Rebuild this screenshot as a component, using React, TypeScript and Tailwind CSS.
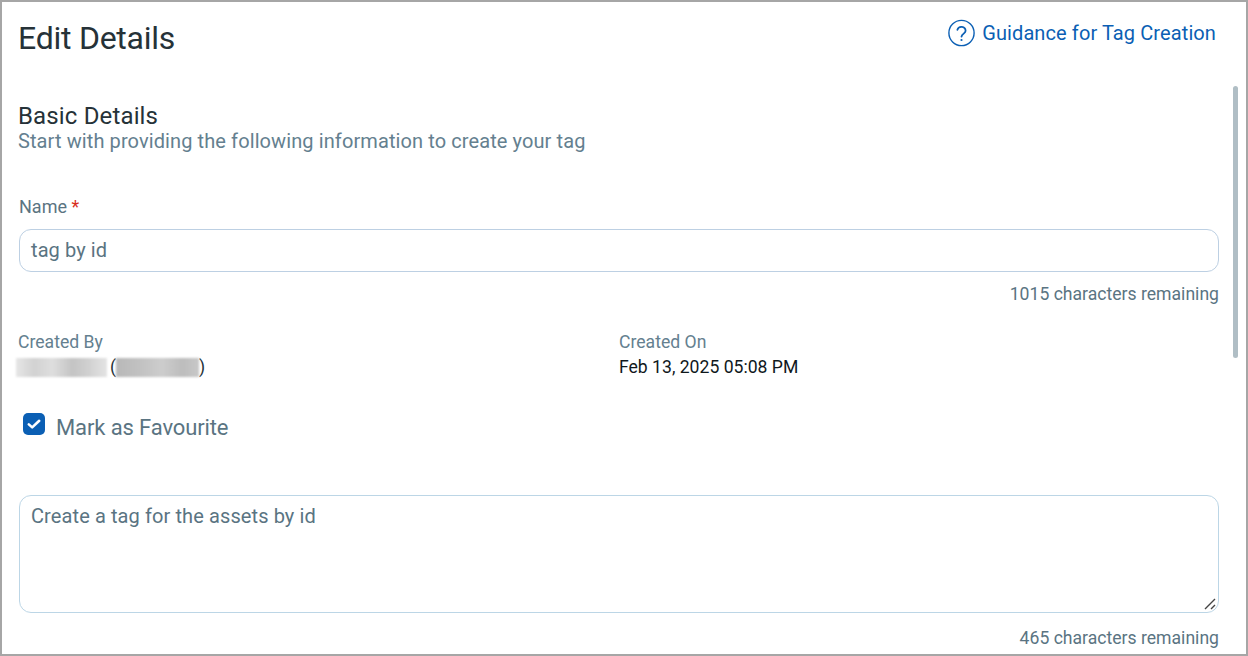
export default function App() {
  return (
    <div className="relative h-[656px] w-[1248px] overflow-hidden border-2 border-[#a6a6a6] bg-white font-['Roboto',sans-serif] text-[#5a7482]">
      <div className="flex items-start justify-between pl-[16px] pr-[30px]">
        <h1 className="mt-[16px] text-[32px] leading-[40px] tracking-[-0.25px] text-[#263238]">Edit Details</h1>
        <a className="mt-[17px] flex items-center gap-[7px] text-[20px] leading-[28px] tracking-[0.1px] text-[#0b5fb4]">
          <svg width="27" height="28" viewBox="0 0 27 28" fill="none" stroke="#0b5fb4" strokeWidth="1.4">
            <circle cx="13.5" cy="14" r="12.6" />
            <path d="M9.4 10.8a4.2 4.2 0 0 1 8.2 1c0 2.6-3.8 3-4.1 5.9" strokeWidth="1.8" strokeLinecap="round" />
            <circle cx="13.5" cy="21" r="1.1" fill="#0b5fb4" stroke="none" />
          </svg>
          Guidance for Tag Creation
        </a>
      </div>
      <div className="pl-[16px] pr-[27px] pt-[44px]">
        <h2 className="text-[24px] leading-[28px] tracking-[0.15px] text-[#263238]">Basic Details</h2>
        <p className="-mt-px text-[20px] leading-[24px] tracking-[0.1px] text-[#64808f]">Start with providing the following information to create your tag</p>

        <label className="mt-[42px] block pl-px text-[18px] leading-[24px]">
          Name <span className="text-[#d9301f]">*</span>
        </label>
        <div className="mt-[10px] ml-px flex h-[43px] items-center rounded-[12px] border border-[#bdd0e3] px-[11px] pb-[2px] text-[20px] tracking-[0.1px]">tag by id</div>
        <p className="mt-[10px] text-right text-[17.6px] leading-[24px]">1015 characters remaining</p>

        <div className="mt-[24px] flex text-[17.6px] leading-[24px]">
          <div className="w-[601px]">
            <p className="text-[#64808f]">Created By</p>
            <div className="mt-px flex items-center text-[#263238]">
              <span className="-ml-[2px] h-[19px] w-[91px] bg-[linear-gradient(90deg,#e6e6e6,#d2d2d2_20%,#dedede_40%,#c4c4c4_62%,#cfcfcf_78%,#e4e4e4)] blur-[1px]" />
              <span className="ml-[3px]">(</span>
              <span className="h-[19px] w-[83px] bg-[linear-gradient(90deg,#b8b8b8,#c2c2c2_30%,#cdcdcd_55%,#bdbdbd_80%,#c8c8c8)] blur-[1px]" />
              <span>)</span>
            </div>
          </div>
          <div>
            <p className="text-[#64808f]">Created On</p>
            <p className="mt-px text-[#10181c]">Feb 13, 2025 05:08 PM</p>
          </div>
        </div>

        <div className="mt-[32px] ml-[5px] flex h-[32px] items-center gap-[11px] text-[22px] tracking-[-0.12px]">
          <span className="-mt-[6px] flex h-[22px] w-[22px] items-center justify-center rounded-[5px] bg-[#0b5fb4]">
            <svg width="16" height="16" viewBox="0 0 16 16" fill="none" stroke="white" strokeWidth="2.6" strokeLinecap="round" strokeLinejoin="round">
              <path d="M2.8 8.4l3.4 3 7-6.6" />
            </svg>
          </span>
          Mark as Favourite
        </div>

        <div className="relative mt-[52px] ml-px h-[118px] rounded-[12px] border border-[#bcd6e6] px-[11px] pt-[6px] text-[20px] leading-[28px] tracking-[0.1px]">
          Create a tag for the assets by id
          <svg className="absolute bottom-[1px] right-[1px]" width="14" height="14" viewBox="0 0 14 14" stroke="#444" strokeWidth="1.4">
            <path d="M2 12L12 2M8 12l4-4" />
          </svg>
        </div>
        <p className="mt-[13px] text-right text-[17.6px] leading-[24px]">465 characters remaining</p>
      </div>
      <div className="absolute left-[1231px] top-[84px] h-[272px] w-[5px] rounded-full bg-[#b0bec5]" />
    </div>
  );
}
